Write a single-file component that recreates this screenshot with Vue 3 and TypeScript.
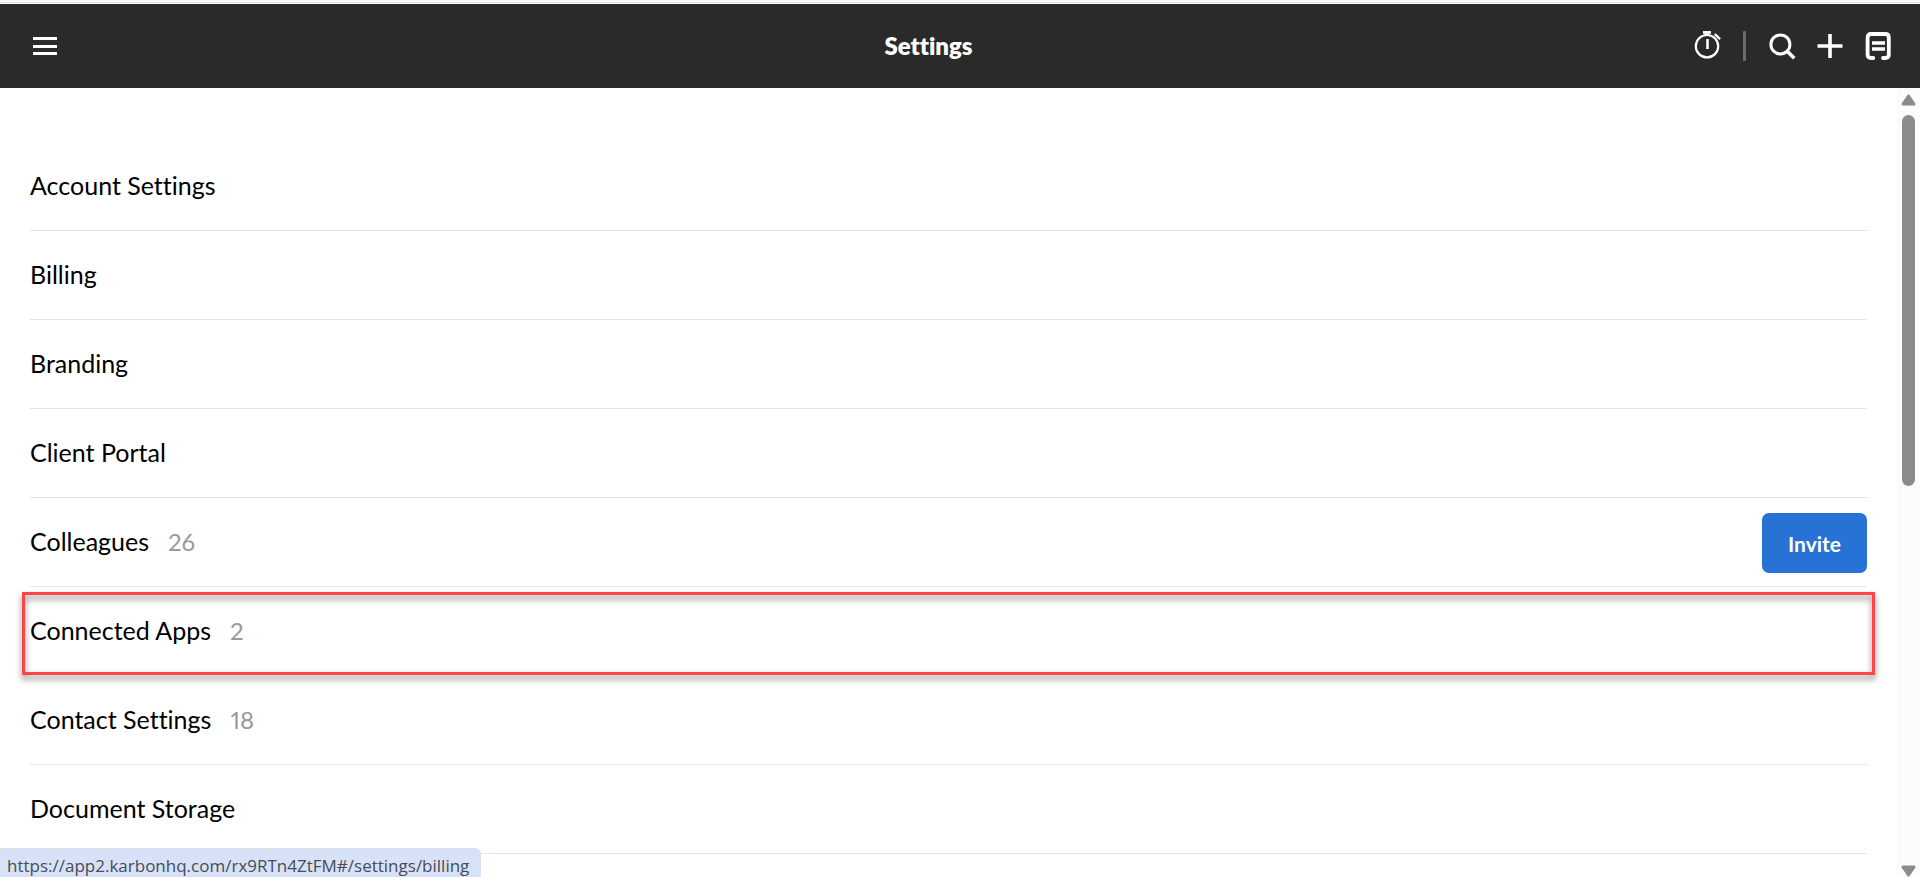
<script setup lang="ts">
interface SettingsItem {
  label: string
  href: string
  count?: number
  invite?: boolean
  highlighted?: boolean
}

const items: SettingsItem[] = [
  { label: 'Account Settings', href: '#/settings/account' },
  { label: 'Billing', href: '#/settings/billing' },
  { label: 'Branding', href: '#/settings/branding' },
  { label: 'Client Portal', href: '#/settings/client-portal' },
  { label: 'Colleagues', href: '#/settings/colleagues', count: 26, invite: true },
  { label: 'Connected Apps', href: '#/settings/connected-apps', count: 2, highlighted: true },
  { label: 'Contact Settings', href: '#/settings/contacts', count: 18 },
  { label: 'Document Storage', href: '#/settings/documents' },
]
</script>

<template>
  <div class="app">
    <header class="topbar">
      <button class="icon-button menu" type="button" aria-label="Menu">
        <svg width="24" height="18" viewBox="0 0 24 18" fill="#fff">
          <rect width="24" height="3" />
          <rect y="8" width="24" height="3" />
          <rect y="15" width="24" height="3" />
        </svg>
      </button>
      <h1 class="title">Settings</h1>
      <div class="actions">
        <button class="icon-button" type="button" aria-label="Timer">
          <svg width="28" height="30" viewBox="0 0 28 30" fill="none" stroke="#fff">
            <circle cx="14" cy="15.2" r="11.2" stroke-width="2.2" />
            <path d="M10 1.4h8M14 1v4" stroke-width="2.6" />
            <path d="M11.5 3.6h5" stroke-width="2" />
            <path d="M14.5 8v10" stroke-width="2.6" />
            <path d="M21.7 3l5.4 5.2" stroke-width="2.4" />
          </svg>
        </button>
        <span class="separator"></span>
        <button class="icon-button" type="button" aria-label="Search">
          <svg width="28" height="30" viewBox="0 0 28 30" fill="none" stroke="#fff" stroke-width="3">
            <circle cx="12.4" cy="13.4" r="9.5" />
            <path d="M19 20l7.3 7.3" stroke-width="3.6" />
          </svg>
        </button>
        <button class="icon-button" type="button" aria-label="Add">
          <svg width="28" height="30" viewBox="0 0 28 30" fill="none" stroke="#fff" stroke-width="3.6">
            <path d="M1.5 15h25M14 3v24" />
          </svg>
        </button>
        <button class="icon-button" type="button" aria-label="Notes">
          <svg width="28" height="30" viewBox="0 0 28 30" fill="none" stroke="#fff" stroke-width="3.8">
            <path
              d="M9.3 27H7Q3.6 27 3.6 23.6V6.5Q3.6 3 7.1 3H21.3Q24.8 3 24.8 6.500V23.6Q24.8 27 21.4 27H19"
              stroke-linecap="round"
            />
            <path d="M8 12h13M8 18h13" stroke-width="3.4" />
          </svg>
        </button>
      </div>
    </header>

    <div class="body">
      <main class="content">
        <ul class="list">
          <li
            v-for="item in items"
            :key="item.label"
            class="row"
            :class="{ highlighted: item.highlighted }"
          >
            <a class="link" :href="item.href">
              <span>{{ item.label }}</span>
              <span v-if="item.count" class="count">{{ item.count }}</span>
            </a>
            <button v-if="item.invite" class="invite" type="button">Invite</button>
          </li>
        </ul>
      </main>

      <div class="scrollbar" aria-hidden="true">
        <svg width="15" height="12" viewBox="0 0 15 12">
          <path d="M7.5 2L13 10H2z" fill="#8b8b8b" stroke="#8b8b8b" stroke-width="3" stroke-linejoin="round" />
        </svg>
        <div class="track"><div class="thumb"></div></div>
        <svg width="15" height="12" viewBox="0 0 15 12">
          <path d="M7.5 10L13 2H2z" fill="#8b8b8b" stroke="#8b8b8b" stroke-width="3" stroke-linejoin="round" />
        </svg>
      </div>
    </div>

    <div class="status">https://app2.karbonhq.com/rx9RTn4ZtFM#/settings/billing</div>
  </div>
</template>

<style>
body {
  margin: 0;
}
</style>

<style scoped>
.app {
  position: relative;
  box-sizing: border-box;
  display: flex;
  flex-direction: column;
  height: 100vh;
  overflow: hidden;
  padding-top: 4px;
  background: linear-gradient(#f7f8fc 2px, #dfe0ec 2px, #dfe0ec 3px, #fff 3px);
  font-family: Lato, "Liberation Sans", sans-serif;
  font-variant-ligatures: none;
  color: #000;
}

.topbar {
  display: grid;
  grid-template-columns: 166px 1fr 229px;
  align-items: center;
  flex: none;
  height: 84px;
  background: #2a2a2a;
}

.icon-button {
  display: block;
  padding: 0;
  border: 0;
  background: none;
  cursor: pointer;
}

.icon-button svg {
  display: block;
}

.menu {
  justify-self: start;
  margin-left: 33px;
}

.title {
  margin: 0;
  color: #fff;
  font-size: 24px;
  font-weight: 800;
  line-height: 30px;
  text-align: center;
}

.actions {
  display: flex;
  justify-content: flex-end;
  gap: 20px;
  padding-right: 28px;
}

.separator {
  width: 3px;
  height: 30px;
  margin: 0 2px;
  border-radius: 1px;
  background: #6c6c6c;
}

.body {
  display: flex;
  flex: 1;
  min-height: 0;
}

.content {
  flex: 1;
  overflow: hidden;
  padding: 54px 30px 0;
}

.list {
  margin: 0;
  padding: 0;
  list-style: none;
}

.row {
  position: relative;
  display: flex;
  align-items: center;
  height: 88px;
  border-bottom: 1px solid #e4e4e4;
}

.highlighted {
  border-bottom-color: transparent;
}

.highlighted::after {
  content: "";
  position: absolute;
  inset: 5px -8px 0;
  border: 3px solid #ff4545;
  filter: drop-shadow(0 4px 3px rgba(0, 0, 0, 0.5));
  pointer-events: none;
}

.link {
  display: flex;
  flex: 1;
  align-items: baseline;
  gap: 19px;
  padding-bottom: 2px;
  color: inherit;
  font-size: 25px;
  line-height: 32px;
  text-decoration: none;
}

.count {
  color: #999;
  font-size: 24px;
  font-variant-numeric: proportional-nums;
}

.invite {
  width: 105px;
  height: 60px;
  margin-top: 2px;
  padding: 2px 0 0;
  border: 0;
  border-radius: 7px;
  background: #2872d5;
  color: #fff;
  font: 700 21px/28px Lato, "Liberation Sans", sans-serif;
  cursor: pointer;
}

.scrollbar {
  box-sizing: border-box;
  display: flex;
  flex-direction: column;
  flex: none;
  align-items: center;
  gap: 9px;
  width: 23px;
  padding-top: 6px;
  background: #fcfcfc;
}

.scrollbar svg {
  flex: none;
}

.track {
  flex: 1;
  width: 13px;
}

.thumb {
  height: 50%;
  border-radius: 7px;
  background: #8b8b8b;
}

.status {
  position: absolute;
  bottom: 0;
  left: 0;
  box-sizing: border-box;
  height: 29px;
  padding: 0 12px 0 7px;
  border-top: 1px solid #dcdfe6;
  border-top-right-radius: 6px;
  background: #d7e2f8;
  color: #474b55;
  font: 17px/33px "Open Sans", "Noto Sans", sans-serif;
  overflow: hidden;
}
</style>
